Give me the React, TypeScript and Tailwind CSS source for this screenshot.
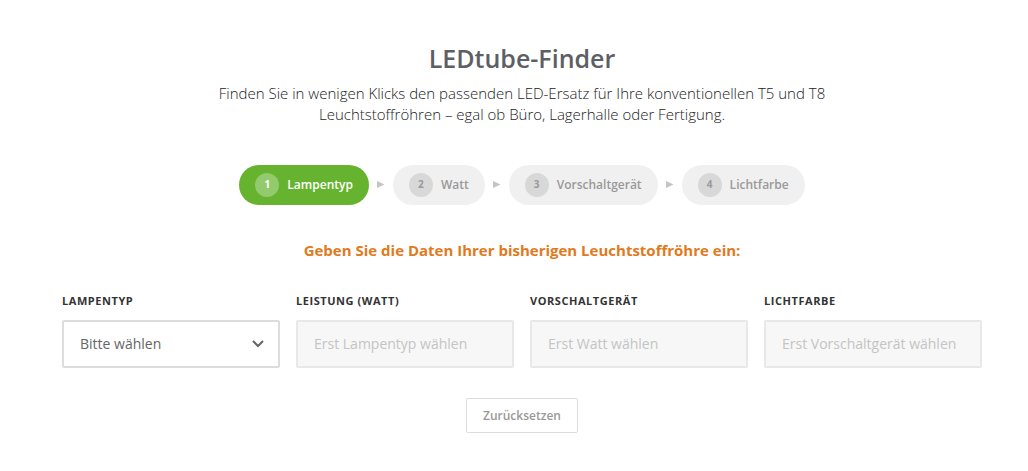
type Field = { id: string; label: string; placeholder: string };

const steps = ['Lampentyp', 'Watt', 'Vorschaltgerät', 'Lichtfarbe'];

const fields: Field[] = [
  { id: 'lampentyp', label: 'Lampentyp', placeholder: 'Bitte wählen' },
  { id: 'leistung', label: 'Leistung (Watt)', placeholder: 'Erst Lampentyp wählen' },
  { id: 'vorschaltgeraet', label: 'Vorschaltgerät', placeholder: 'Erst Watt wählen' },
  { id: 'lichtfarbe', label: 'Lichtfarbe', placeholder: 'Erst Vorschaltgerät wählen' },
];

function Steps({ current }: { current: number }) {
  return (
    <ol className="mt-10 flex items-center justify-center gap-2">
      {steps.map((step, i) => (
        <li key={step} className="flex items-center gap-2">
          {i > 0 && (
            <svg viewBox="0 0 8 8" className="size-2 fill-[#c4c4c4]" aria-hidden="true">
              <path d="M0 0L7.500 3.500L0 7Z" />
            </svg>
          )}
          <div
            className={`flex h-10 items-center gap-2 rounded-full px-4 text-xs font-semibold ${
              i === current ? 'bg-[#65b32e] text-white' : 'bg-[#f0f0f0] text-[#999]'
            }`}
          >
            <span
              className={`flex size-6 items-center justify-center rounded-full text-[10px] font-bold ${
                i === current ? 'bg-white/30' : 'bg-[#d8d8d8]'
              }`}
            >
              {i + 1}
            </span>
            {step}
          </div>
        </li>
      ))}
    </ol>
  );
}

function SelectField({ field, disabled }: { field: Field; disabled: boolean }) {
  return (
    <div>
      <label htmlFor={field.id} className="block text-[11px] leading-4 font-bold tracking-wider text-[#333] uppercase">
        {field.label}
      </label>
      <div className="relative mt-[11px]">
        <select
          id={field.id}
          disabled={disabled}
          className={`h-12 w-full appearance-none rounded-xs border-2 px-4 text-sm ${
            disabled ? 'border-[#e8e8e8] bg-[#f7f7f7] text-[#c4c4c4] opacity-100' : 'border-[#ddd] bg-white text-[#666]'
          }`}
        >
          <option>{field.placeholder}</option>
        </select>
        {!disabled && (
          <svg
            viewBox="0 0 12 8"
            className="pointer-events-none absolute top-5 right-4 h-2 w-3 fill-none stroke-[#666] stroke-2"
            aria-hidden="true"
          >
            <path d="M1 1L6 6L11 1" />
          </svg>
        )}
      </div>
    </div>
  );
}

export default function App() {
  return (
    <main className="bg-white pt-10 pr-[46px] pb-9 pl-[62px] font-['Open_Sans',sans-serif] text-[#555]">
      <header className="text-center">
        <h1 className="text-[25px] leading-9 font-semibold text-[#5c6064]">LEDtube-Finder</h1>
        <p className="mx-auto mt-[7px] max-w-[640px] text-[15px] leading-[21px] font-light text-[#222]">
          Finden Sie in wenigen Klicks den passenden LED-Ersatz für Ihre konventionellen T5 und T8
          Leuchtstoffröhren – egal ob Büro, Lagerhalle oder Fertigung.
        </p>
      </header>

      <Steps current={0} />

      <h2 className="mt-[35px] text-center text-[15px] leading-5 font-bold text-[#e17a1c]">
        Geben Sie die Daten Ihrer bisherigen Leuchtstoffröhre ein:
      </h2>

      <form>
        <div className="mt-[33px] grid grid-cols-4 gap-4">
          {fields.map((field, i) => (
            <SelectField key={field.id} field={field} disabled={i > 0} />
          ))}
        </div>
        <div className="mt-[30px] flex justify-center">
          <button type="reset" className="h-[35px] rounded-xs border border-[#ddd] px-4 text-xs font-semibold text-[#999]">
            Zurücksetzen
          </button>
        </div>
      </form>
    </main>
  );
}
